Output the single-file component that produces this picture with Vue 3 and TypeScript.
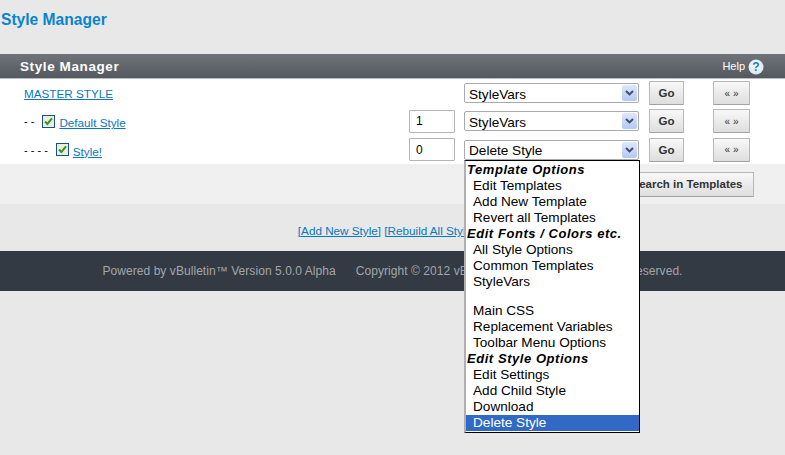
<template>
  <div class="page">
    <h1 class="title">Style Manager</h1>

    <section class="panel">
      <header class="panel-head">
        <span class="panel-title">Style Manager</span>
        <span class="help">
          Help
          <svg class="help-icon" width="16" height="16" viewBox="0 0 16 16">
            <defs>
              <radialGradient id="helpFill" cx="50%" cy="40%" r="60%">
                <stop offset="0%" stop-color="#ffffff" />
                <stop offset="100%" stop-color="#d5e4f0" />
              </radialGradient>
            </defs>
            <circle cx="8" cy="8" r="7.5" fill="url(#helpFill)" />
            <text x="8" y="12" text-anchor="middle" class="help-mark">?</text>
          </svg>
        </span>
      </header>

      <div class="rows">
        <div v-for="row in rows" :key="row.name" class="row">
          <div class="name">
            <span v-if="row.prefix" class="dashes">{{ row.prefix }}</span>
            <svg v-if="row.checked" class="check" width="13" height="13" viewBox="0 0 13 13">
              <rect x="0.5" y="0.5" width="12" height="12" fill="#ececdf" stroke="#1c5180" />
              <path d="M3 6.5 5.4 9 10 3.4" fill="none" stroke="#2b9a2f" stroke-width="2" />
            </svg>
            <a class="link">{{ row.name }}</a>
          </div>
          <input v-if="row.order !== null" class="order" :value="row.order" />
          <div class="select">
            <span class="select-text">{{ row.action }}</span>
            <span class="arrow">
              <svg width="9" height="6" viewBox="0 0 9 6">
                <path d="M1 1 4.5 4.4 8 1" fill="none" stroke="#3c4d6e" stroke-width="2" />
              </svg>
            </span>
          </div>
          <button class="btn go">Go</button>
          <button class="btn expand">« »</button>
        </div>
      </div>

      <div class="panel-foot">
        <button class="btn search">Search in Templates</button>
      </div>
    </section>

    <p class="actions">
      <a class="link">[Add New Style]</a> <a class="link">[Rebuild All Styles]</a>
    </p>

    <footer class="footer">
      <span>Powered by vBulletin™ Version 5.0.0 Alpha</span>
      <span>Copyright © 2012 vBulletin Solutions, Inc. All rights reserved.</span>
    </footer>

    <ul class="menu">
      <li
        v-for="(item, i) in menu"
        :key="i"
        :class="{ group: item.group, blank: !item.label, selected: item.selected }"
      >
        {{ item.label }}
      </li>
    </ul>
  </div>
</template>

<script setup lang="ts">
interface Row {
  name: string
  prefix: string
  checked: boolean
  order: number | null
  action: string
}

interface MenuItem {
  label: string
  group?: boolean
  selected?: boolean
}

const rows: Row[] = [
  { name: 'MASTER STYLE', prefix: '', checked: false, order: null, action: 'StyleVars' },
  { name: 'Default Style', prefix: '- -', checked: true, order: 1, action: 'StyleVars' },
  { name: 'Style!', prefix: '- - - -', checked: true, order: 0, action: 'Delete Style' }
]

const menu: MenuItem[] = [
  { label: 'Template Options', group: true },
  { label: 'Edit Templates' },
  { label: 'Add New Template' },
  { label: 'Revert all Templates' },
  { label: 'Edit Fonts / Colors etc.', group: true },
  { label: 'All Style Options' },
  { label: 'Common Templates' },
  { label: 'StyleVars' },
  { label: '' },
  { label: 'Main CSS' },
  { label: 'Replacement Variables' },
  { label: 'Toolbar Menu Options' },
  { label: 'Edit Style Options', group: true },
  { label: 'Edit Settings' },
  { label: 'Add Child Style' },
  { label: 'Download' },
  { label: 'Delete Style', selected: true }
]
</script>

<style>
html,
body {
  margin: 0;
  background: #e8e8e8;
}
</style>

<style scoped>
.page {
  position: relative;
  width: 785px;
  height: 455px;
  overflow: hidden;
  font-family: "Liberation Sans", Arial, sans-serif;
  font-size: 12px;
  color: #000;
}

.title {
  margin: 0;
  padding: 11px 0 0 1px;
  height: 54px;
  box-sizing: border-box;
  font-size: 15.6px;
  line-height: 17px;
  font-weight: bold;
  color: #0a84ce;
}

.panel-head {
  display: flex;
  align-items: center;
  justify-content: space-between;
  height: 25px;
  box-sizing: border-box;
  padding: 0 21px 0 20px;
  background: linear-gradient(#70737a, #54585f);
  border-bottom: 1px solid #b9bec4;
  color: #fff;
}

.panel-title {
  font-size: 13.5px;
  font-weight: bold;
  letter-spacing: 0.6px;
}

.help {
  display: flex;
  align-items: center;
  gap: 3px;
  font-size: 11px;
}

.help-icon {
  margin-top: 2px;
}

.help-mark {
  font-size: 12px;
  font-weight: bold;
  fill: #1a7cc4;
}

.rows {
  display: flex;
  flex-direction: column;
  height: 85px;
  background: #fff;
}

.row {
  display: flex;
  align-items: center;
  height: 28.5px;
  padding-right: 35px;
}

.name {
  display: flex;
  align-items: center;
  gap: 8px;
  margin-left: 24px;
  margin-right: auto;
}

.dashes {
  font-size: 11px;
}

.check {
  margin-right: -4px;
}

.check + .link {
  margin-top: 3px;
}

.link {
  color: #0a78c0;
  text-decoration: underline;
  font-size: 11.7px;
}

.order {
  width: 46px;
  height: 23px;
  box-sizing: border-box;
  margin-right: 9px;
  padding: 0 0 0 6px;
  border: 1px solid #b5b5b5;
  border-radius: 1px;
  background: #fff;
  font: 12px "Liberation Sans", Arial, sans-serif;
  color: #000;
}

.select {
  display: flex;
  align-items: center;
  justify-content: space-between;
  width: 175px;
  height: 20px;
  box-sizing: border-box;
  padding: 0 1px 0 4px;
  border: 1px solid #a9a9b0;
  border-radius: 2px;
  background: #fff;
  font-size: 13.6px;
}

.select-text {
  padding-top: 2px;
}

.arrow {
  display: flex;
  align-items: center;
  justify-content: center;
  width: 15px;
  height: 16px;
  border-radius: 2px;
  background: linear-gradient(#dfe8fb, #b4c8f2);
}

.btn {
  box-sizing: border-box;
  height: 24px;
  padding: 0;
  border: 1px solid #b8b8b8;
  border-bottom-color: #a2a2a2;
  border-radius: 1px;
  background: linear-gradient(#f8f8f8, #dedede);
  font-family: "Liberation Sans", Arial, sans-serif;
  font-weight: bold;
  color: #333;
}

.go {
  width: 35px;
  margin-left: 10px;
  font-size: 11.5px;
}

.expand {
  width: 37px;
  margin-left: 29px;
  font-size: 10px;
  font-weight: normal;
}

.panel-foot {
  display: flex;
  justify-content: flex-end;
  align-items: center;
  height: 40px;
  padding-right: 31px;
  background: #f0f0f0;
}

.search {
  width: 134px;
  height: 25px;
  font-size: 11.5px;
}

.actions {
  margin: 0;
  height: 47px;
  padding-top: 19px;
  padding-right: 6px;
  box-sizing: border-box;
  text-align: center;
  line-height: 16px;
}

.footer {
  display: flex;
  justify-content: center;
  align-items: center;
  gap: 20px;
  height: 40px;
  background: #333a44;
  color: #a3a6aa;
  font-size: 12px;
  letter-spacing: 0.06px;
}

.menu {
  position: absolute;
  left: 464px;
  top: 160px;
  width: 176px;
  box-sizing: border-box;
  margin: 0;
  padding: 1px 0 1px;
  list-style: none;
  background: #fff;
  border-top: 1px solid #000;
  border-right: 1px solid #000;
  border-bottom: 1px solid #000;
  border-left: 2px solid #b0b0b0;
  font-size: 13.6px;
  line-height: 16px;
}

.menu li {
  height: 16px;
  padding-left: 7px;
  white-space: nowrap;
}

.menu li.group {
  padding-left: 1px;
  font-weight: bold;
  font-style: italic;
  font-size: 13px;
  letter-spacing: 0.55px;
}

.menu li.blank {
  height: 13px;
}

.menu li.selected {
  background: #316ac5;
  color: #fff;
}
</style>
